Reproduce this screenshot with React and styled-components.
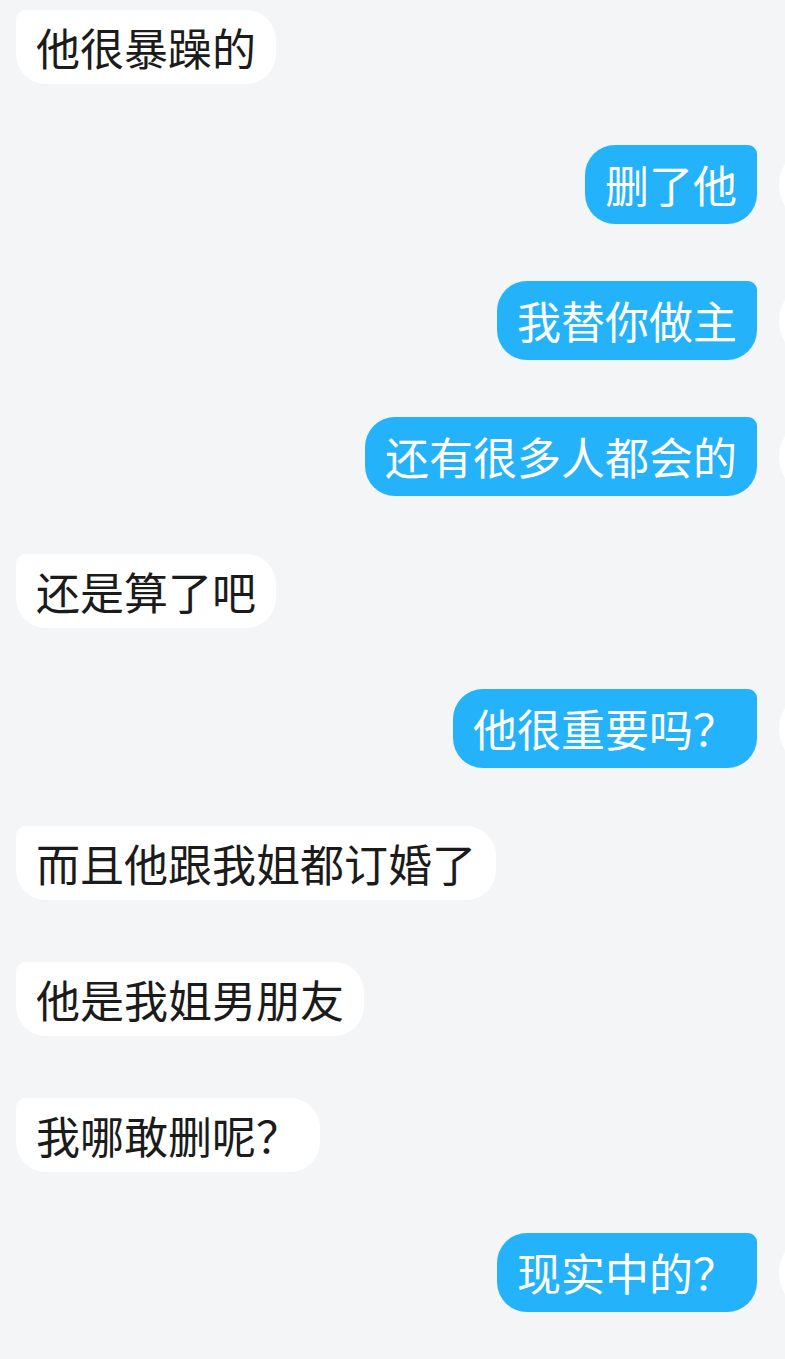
import React from "react";
import styled, { createGlobalStyle } from "styled-components";

const GlobalStyle = createGlobalStyle`
  html, body {
    margin: 0;
    padding: 0;
    background: #f4f5f7;
    overflow: hidden;
  }
`;

const Chat = styled.div`
  width: 785px;
  min-height: 1359px;
  background: #f4f5f7;
  overflow: hidden;
  font-family: "Noto Sans CJK SC", "Noto Sans", sans-serif;
`;

const Row = styled.div`
  height: 136px;
  box-sizing: border-box;
  display: flex;
  align-items: flex-start;
  justify-content: ${({ mine }) => (mine ? "flex-end" : "flex-start")};
  padding-top: ${({ mine }) => (mine ? "9px" : "10px")};
  padding-left: 16px;
`;

const Bubble = styled.div`
  box-sizing: border-box;
  font-size: 44px;
  line-height: 54px;
  white-space: nowrap;
  padding: ${({ mine }) => (mine ? "12px 20px 13px" : "10px 20px")};
  background: ${({ mine }) => (mine ? "#24b3fa" : "#ffffff")};
  color: ${({ mine }) => (mine ? "#ffffff" : "#1b1b1b")};
  border-radius: ${({ mine }) => (mine ? "30px 9px 30px 30px" : "10px 30px 30px 30px")};
`;

const Avatar = styled.div`
  flex: none;
  width: 80px;
  height: 80px;
  border-radius: 50%;
  background: #ffffff;
  margin-left: 22px;
  margin-right: -74px;
`;

const messages = [
  { mine: false, text: "他很暴躁的" },
  { mine: true, text: "删了他" },
  { mine: true, text: "我替你做主" },
  { mine: true, text: "还有很多人都会的" },
  { mine: false, text: "还是算了吧" },
  { mine: true, text: "他很重要吗？" },
  { mine: false, text: "而且他跟我姐都订婚了" },
  { mine: false, text: "他是我姐男朋友" },
  { mine: false, text: "我哪敢删呢？" },
  { mine: true, text: "现实中的？" },
];

export default function App() {
  return (
    <>
      <GlobalStyle />
      <Chat>
        {messages.map((m, i) => (
          <Row key={i} mine={m.mine}>
            <Bubble mine={m.mine}>{m.text}</Bubble>
            {m.mine && <Avatar />}
          </Row>
        ))}
      </Chat>
    </>
  );
}
